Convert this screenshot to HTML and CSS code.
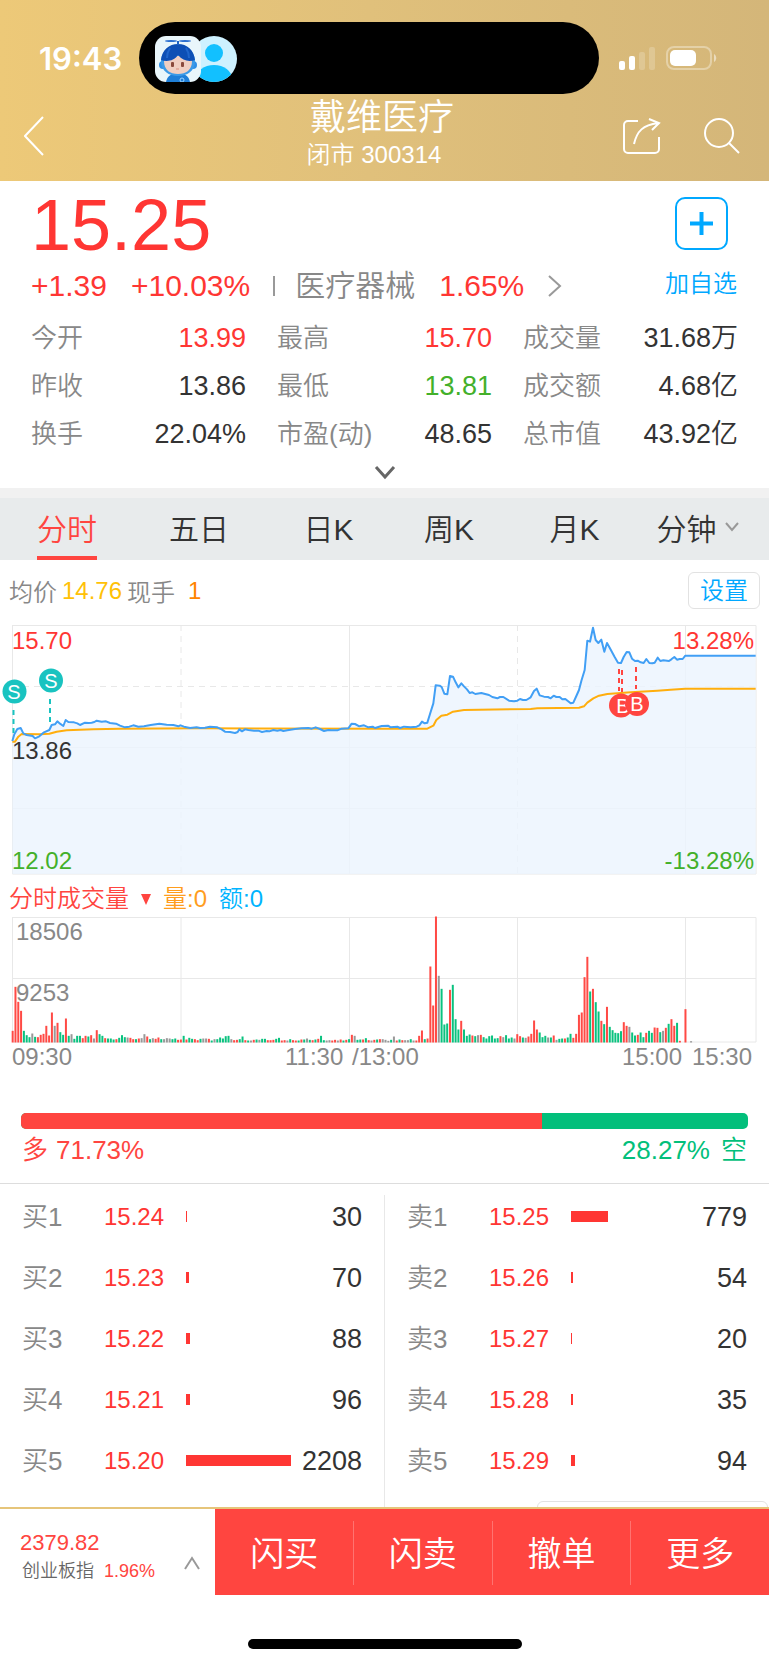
FILE: index.html
```html
<!DOCTYPE html>
<html lang="zh-CN">
<head>
    <meta charset="UTF-8">
    <meta name="viewport" content="width=device-width, initial-scale=1.0">
    <title>戴维医疗 300314</title>
    <link rel="stylesheet" href="styles.css">
</head>
<body>
    <header class="header">
        <div class="status-bar">
            <span class="clock">19:43</span>
            <div class="island">
                <svg width="84" height="46" viewBox="0 0 84 46">
                    <defs>
                        <clipPath id="userClip"><circle cx="59" cy="23" r="23"/></clipPath>
                        <clipPath id="avatarClip"><rect width="46" height="46" rx="11"/></clipPath>
                    </defs>
                    <circle cx="59" cy="23" r="23" fill="#cdf1ff"/>
                    <g clip-path="url(#userClip)" fill="#12c0ff">
                        <circle cx="59" cy="17" r="9"/>
                        <ellipse cx="59" cy="43" rx="18" ry="14"/>
                    </g>
                    <g clip-path="url(#avatarClip)">
                        <rect width="46" height="46" fill="#e9f6fb"/>
                        <path d="M11 46c1-6 6-9 12-9s11 3 12 9z" fill="#1f7fd8"/>
                        <circle cx="8" cy="29" r="4" fill="#2f8fe6"/>
                        <circle cx="38" cy="29" r="4" fill="#2f8fe6"/>
                        <path d="M6 25a17 16 0 0 1 34 0c0 10-8 15-17 15S6 35 6 25z" fill="#3c9be8"/>
                        <path d="M9 25c0 9 6 13 14 13s14-4 14-13l-3-5H12z" fill="#f0cfc2"/>
                        <path d="M6 24C7 14 14 8 23 8s16 6 17 16c-6 2-12 1-17-5-4 6-11 7-17 5z" fill="#0d4fb5"/>
                        <path d="M15 12c-2 3-3 6-3 10M31 12c2 3 3 6 3 10" fill="none" stroke="#1f66cc" stroke-width="2"/>
                        <rect x="16" y="26" width="3" height="5" rx="1" fill="#8a4a3c"/>
                        <rect x="26" y="26" width="3" height="5" rx="1" fill="#8a4a3c"/>
                        <path d="M21 33h3" stroke="#d89080" stroke-width="1"/>
                        <path d="M23 9V5" stroke="#1d62c4" stroke-width="2"/>
                        <ellipse cx="16" cy="5" rx="6" ry="1" fill="#2c70d0"/>
                        <ellipse cx="30" cy="5" rx="6" ry="1" fill="#2c70d0"/>
                        <circle cx="27" cy="44" r="2" fill="none" stroke="#9fd4ff"/>
                    </g>
                </svg>
            </div>
            <svg class="signal" width="99" height="24" viewBox="0 0 99 24" fill="#fff">
                <rect x="0" y="15" width="6" height="9" rx="2"/>
                <rect x="10" y="10" width="6" height="14" rx="2"/>
                <rect x="20" y="6" width="6" height="18" rx="2" opacity=".2"/>
                <rect x="30" y="1" width="6" height="23" rx="2" opacity=".2"/>
                <rect x="48" y="1" width="44" height="22" rx="7" fill="none" stroke="#fff" stroke-width="2" opacity=".35"/>
                <rect x="51" y="4" width="26" height="16" rx="5"/>
                <path d="M95 8c3 2 3 6 0 8z" opacity=".5"/>
            </svg>
        </div>
        <nav class="nav-bar">
            <button class="icon-btn back" aria-label="返回">
                <svg width="20" height="40" viewBox="0 0 20 40"><path d="M19 1 1 20l18 19"/></svg>
            </button>
            <div class="nav-title">
                <h1>戴维医疗</h1>
                <p>闭市 300314</p>
            </div>
            <div class="nav-actions">
                <button class="icon-btn" aria-label="分享">
                    <svg width="38" height="38" viewBox="0 0 38 38">
                        <path d="M15 4H5a4 4 0 0 0-4 4v24a4 4 0 0 0 4 4h27a4 4 0 0 0 4-4V20"/>
                        <path d="M11 27C14 14 20 8 35 6M26 2l10 4-7 7"/>
                    </svg>
                </button>
                <button class="icon-btn" aria-label="搜索">
                    <svg width="37" height="38" viewBox="0 0 37 38"><circle cx="16" cy="16" r="14"/><path d="m26 26 10 10"/></svg>
                </button>
            </div>
        </nav>
    </header>

    <main>
        <section class="quote">
            <div class="quote-top">
                <div>
                    <div class="price">15.25</div>
                    <div class="change">
                        <span class="up">+1.39</span>
                        <span class="up change-pct">+10.03%</span>
                        <i class="sep"></i>
                        <a class="industry" href="#">
                            <span>医疗器械</span>
                            <span class="up">1.65%</span>
                            <svg width="14" height="24" viewBox="0 0 14 24"><path d="m1 2 11 10L1 22"/></svg>
                        </a>
                    </div>
                </div>
                <button class="add-btn">
                    <svg width="53" height="53" viewBox="0 0 53 53">
                        <rect x="1" y="1" width="51" height="51" rx="9" fill="none" stroke="#00a8ff" stroke-width="2"/>
                        <path d="M15 26.500h23M26.500 15v23" stroke="#00a8ff" stroke-width="4"/>
                    </svg>
                    <span>加自选</span>
                </button>
            </div>
            <dl class="stats">
                <div><dt>今开</dt><dd class="up">13.99</dd></div>
                <div><dt>最高</dt><dd class="up">15.70</dd></div>
                <div><dt>成交量</dt><dd>31.68万</dd></div>
                <div><dt>昨收</dt><dd>13.86</dd></div>
                <div><dt>最低</dt><dd class="down">13.81</dd></div>
                <div><dt>成交额</dt><dd>4.68亿</dd></div>
                <div><dt>换手</dt><dd>22.04%</dd></div>
                <div><dt>市盈(动)</dt><dd>48.65</dd></div>
                <div><dt>总市值</dt><dd>43.92亿</dd></div>
            </dl>
            <button class="expand-btn" aria-label="展开">
                <svg width="22" height="16" viewBox="0 0 22 16"><path d="m2 2 9 10 9-10"/></svg>
            </button>
        </section>

        <div class="tabs">
            <button class="tab active">分时</button>
            <button class="tab">五日</button>
            <button class="tab">日K</button>
            <button class="tab">周K</button>
            <button class="tab">月K</button>
            <button class="tab">分钟<svg width="14" height="10" viewBox="0 0 14 10"><path d="m1 1 6 7 6-7"/></svg></button>
        </div>

        <section class="chart">
            <div class="chart-info">
                <span>均价</span>
                <span class="avg">14.76</span>
                <span>现手</span>
                <span class="hand">1</span>
                <button class="set-btn">设置</button>
            </div>

            <svg class="plot" viewBox="0 0 769 267">
                <g class="grid">
                    <path d="M12 10.500H756V259H12.500V10"/>
                    <path d="M12 132.500H756M12 193.500H756M349.500 10V259M685.500 10V259"/>
                    <path d="M12 71.500H756M181 10V259M517.500 10V259" stroke-dasharray="6 5"/>
                </g>
                <polygon id="priceArea" class="area"/>
                <polyline id="avgLine" class="line-avg"/>
                <polyline id="priceLine" class="line-price"/>
                <text x="12" y="34" class="t-up">15.70</text>
                <text x="12" y="144" class="t-base">13.86</text>
                <text x="12" y="254" class="t-down">12.02</text>
                <text x="754" y="34" class="t-up" text-anchor="end">13.28%</text>
                <text x="754" y="254" class="t-down" text-anchor="end">-13.28%</text>
                <g class="sell-mark">
                    <path d="M13.500 95v24M50 84v24"/>
                    <circle cx="14.500" cy="76.500" r="12"/><text x="14" y="84">S</text>
                    <circle cx="51" cy="65.500" r="12"/><text x="51" y="73">S</text>
                </g>
                <g class="buy-mark">
                    <path d="M619 54v22M622 55v22M636 52v22"/>
                    <circle cx="621" cy="90.500" r="12"/><text x="623" y="98">B</text>
                    <circle cx="637" cy="89" r="12"/><text x="637" y="96">B</text>
                </g>
            </svg>

            <div class="volume-info">
                <button class="volume-type">分时成交量<svg width="10" height="11" viewBox="0 0 10 11"><path d="M0 0h10L5 11z"/></svg></button>
                <span class="vol">量:0</span>
                <span class="amt">额:0</span>
            </div>

            <svg class="plot" viewBox="0 0 769 156">
                <g class="grid">
                    <path d="M12 1.500H756V126H12.500V1"/>
                    <path d="M12 62.500H756M181 1V126M349.500 1V126M517.500 1V126M685.500 1V126"/>
                </g>
                <g id="volumeBars"></g>
                <g class="t-label">
                    <text x="16" y="24">18506</text>
                    <text x="16" y="85">9253</text>
                    <text x="12" y="149">09:30</text>
                    <text x="285" y="149">11:30</text>
                    <text x="352" y="149">/13:00</text>
                    <text x="682" y="149" text-anchor="end">15:00</text>
                    <text x="752" y="149" text-anchor="end">15:30</text>
                </g>
            </svg>
        </section>

        <section class="strength">
            <div class="strength-bar"><i style="width: 71.73%"></i></div>
            <div class="strength-text">
                <span class="long"><span>多</span><span>71.73%</span></span>
                <span class="short"><span>28.27%</span><span>空</span></span>
            </div>
        </section>

        <section class="book">
            <table>
                <tr><th>买1</th><td class="p">15.24</td><td><i class="bar" style="width: 1px"></i></td><td class="q">30</td></tr>
                <tr><th>买2</th><td class="p">15.23</td><td><i class="bar" style="width: 3px"></i></td><td class="q">70</td></tr>
                <tr><th>买3</th><td class="p">15.22</td><td><i class="bar" style="width: 4px"></i></td><td class="q">88</td></tr>
                <tr><th>买4</th><td class="p">15.21</td><td><i class="bar" style="width: 4px"></i></td><td class="q">96</td></tr>
                <tr><th>买5</th><td class="p">15.20</td><td><i class="bar" style="width: 105px"></i></td><td class="q">2208</td></tr>
            </table>
            <div class="divider"></div>
            <table>
                <tr><th>卖1</th><td class="p">15.25</td><td><i class="bar" style="width: 37px"></i></td><td class="q">779</td></tr>
                <tr><th>卖2</th><td class="p">15.26</td><td><i class="bar" style="width: 2px"></i></td><td class="q">54</td></tr>
                <tr><th>卖3</th><td class="p">15.27</td><td><i class="bar" style="width: 1px"></i></td><td class="q">20</td></tr>
                <tr><th>卖4</th><td class="p">15.28</td><td><i class="bar" style="width: 2px"></i></td><td class="q">35</td></tr>
                <tr><th>卖5</th><td class="p">15.29</td><td><i class="bar" style="width: 4px"></i></td><td class="q">94</td></tr>
            </table>
            <div class="popup-edge"></div>
        </section>
    </main>

    <footer>
        <div class="bottom-bar">
            <button class="index-box">
                <span class="index-text">
                    <span class="index-value">2379.82</span>
                    <span class="index-name">创业板指 <b>1.96%</b></span>
                </span>
                <svg width="18" height="14" viewBox="0 0 18 14"><path d="m2 13 7-11 7 11"/></svg>
            </button>
            <div class="trade">
                <button>闪买</button>
                <button>闪卖</button>
                <button>撤单</button>
                <button>更多</button>
            </div>
        </div>
        <div class="home-indicator"></div>
    </footer>

    <script src="chart.js"></script>
</body>
</html>
```

FILE: styles.css
```css
* {
    box-sizing: border-box;
    margin: 0;
    padding: 0;
}

body {
    font-family: "Liberation Sans", "Noto Sans CJK SC", sans-serif;
    font-weight: 350;
    font-size: 24px;
    color: #333;
    background: #fff;
}

button {
    font: inherit;
    color: inherit;
    background: none;
    border: none;
    cursor: pointer;
}

a {
    color: inherit;
    text-decoration: none;
}

svg {
    display: block;
    flex: none;
}

.up {
    color: #ff3633;
}

.down {
    color: #43b02a;
}

/* Header */
.header {
    color: #fff;
    background: linear-gradient(90deg, #edc978, #e0c07b 48%, #d4b679);
}

.status-bar {
    display: flex;
    align-items: center;
    padding: 22px 51px 0 39px;
}

.clock {
    width: 100px;
    font-family: Inter, sans-serif;
    font-size: 31px;
    font-weight: 600;
}

.island {
    flex: 1;
    height: 72px;
    padding: 14px 16px;
    border-radius: 36px;
    background: #000;
}

.signal {
    margin-left: 20px;
}

.nav-bar {
    display: grid;
    grid-template-columns: 1fr auto 1fr;
    align-items: center;
    height: 87px;
    padding: 0 29px 4px 24px;
}

.icon-btn svg {
    fill: none;
    stroke: #fff;
    stroke-width: 2;
}

.back {
    justify-self: start;
}

.nav-title {
    padding-bottom: 6px;
    text-align: center;
}

.nav-title h1 {
    font-size: 36px;
    font-weight: 350;
    line-height: 44px;
}

.nav-title p {
    padding-right: 16px;
    line-height: 30px;
}

.nav-actions {
    display: flex;
    justify-content: flex-end;
    gap: 42px;
}

/* Quote */
.quote {
    padding: 0 31px;
    border-bottom: 10px solid #f1f1f1;
}

.quote-top {
    display: flex;
    justify-content: space-between;
}

.price {
    font-size: 72px;
    line-height: 88px;
    color: #ff3633;
}

.change {
    display: flex;
    align-items: center;
    font-size: 30px;
    line-height: 34px;
}

.change-pct {
    margin-left: 24px;
}

.sep {
    width: 2px;
    height: 20px;
    margin: 0 20px 0 23px;
    background: #999;
}

.industry {
    display: flex;
    align-items: center;
    gap: 24px;
    color: #888;
}

.industry svg {
    fill: none;
    stroke: #999;
    stroke-width: 2;
}

.add-btn {
    display: flex;
    flex-direction: column;
    align-items: center;
    gap: 19px;
    padding: 16px 1px 0 0;
    line-height: 30px;
    color: #00a8ff;
}

.stats {
    display: grid;
    grid-template-columns: repeat(3, 1fr);
    column-gap: 31px;
    margin-top: 11px;
    line-height: 48px;
}

.stats div {
    display: flex;
    justify-content: space-between;
}

.stats dt {
    font-size: 26px;
    color: #888;
}

.stats dd {
    font-size: 27px;
}

.expand-btn {
    display: flex;
    justify-content: center;
    align-items: center;
    width: 100%;
    height: 30px;
}

.expand-btn svg {
    fill: none;
    stroke: #666;
    stroke-width: 3;
}

/* Period tabs */
.tabs {
    display: grid;
    grid-template-columns: 134fr 130fr 129fr 112fr 139fr 107fr;
    height: 62px;
    padding-right: 18px;
    background: #e8ebec;
}

.tab {
    display: flex;
    justify-content: center;
    align-items: center;
    justify-self: center;
    gap: 8px;
    border-bottom: 4px solid transparent;
    font-size: 30px;
    white-space: nowrap;
}

.tab.active {
    color: #ff4540;
    border-bottom-color: #ff4540;
}

.tab svg {
    fill: none;
    stroke: #999;
    stroke-width: 2;
}

/* Charts */
.chart-info {
    display: flex;
    align-items: center;
    gap: 5px;
    padding: 12px 9px 6px;
    color: #888;
}

.avg {
    color: #ffc107;
}

.hand {
    margin-left: 8px;
    color: #ff8400;
}

.set-btn {
    height: 37px;
    margin-left: auto;
    padding: 0 11px;
    border: 1px solid #e2e2e2;
    border-radius: 6px;
    line-height: 35px;
    color: #00a8ff;
}

.plot {
    width: 100%;
    height: auto;
    font-size: 24px;
}

.grid {
    fill: none;
    stroke: #e8e8e8;
}

.area {
    fill: #ebf4fe;
    fill-opacity: 0.8;
}

.line-price,
.line-avg {
    fill: none;
    stroke-width: 2;
    stroke-linejoin: round;
}

.line-price {
    stroke: #419ff5;
}

.line-avg {
    stroke: #ffae0d;
}

.t-up {
    fill: #ff3633;
}

.t-down {
    fill: #43b02a;
}

.t-base {
    fill: #333;
}

.t-label {
    fill: #888;
}

.sell-mark path,
.buy-mark path {
    stroke-width: 2;
    stroke-dasharray: 5 4;
}

.sell-mark path {
    stroke: #19c3c0;
}

.sell-mark circle {
    fill: #19c3c0;
}

.buy-mark path {
    stroke: #ff4540;
}

.buy-mark circle {
    fill: #ff4540;
}

.sell-mark text,
.buy-mark text {
    fill: #fff;
    font-size: 20px;
    text-anchor: middle;
}

.volume-info {
    display: flex;
    gap: 12px;
    padding-left: 9px;
    line-height: 34px;
}

.volume-type {
    display: flex;
    align-items: center;
    gap: 12px;
    color: #ff4540;
    fill: #ff4540;
}

.vol {
    color: #ff9d1e;
}

.amt {
    color: #00b4ff;
}

.bar-r {
    fill: #ff4a45;
}

.bar-g {
    fill: #0ac27f;
}

.bar-k {
    fill: #999;
}

/* Long / short strength */
.strength {
    padding: 41px 21px 16px;
    border-bottom: 1px solid #ddd;
}

.strength-bar {
    display: flex;
    height: 16px;
    border-radius: 5px;
    overflow: hidden;
    background: #02bf7b;
}

.strength-bar i {
    background: #ff4540;
}

.strength-text {
    display: flex;
    justify-content: space-between;
    padding: 4px 1px 0;
    font-size: 26px;
    line-height: 34px;
}

.long,
.short {
    display: flex;
    gap: 8px;
}

.long {
    color: #ff4540;
}

.short {
    gap: 11px;
    color: #02bf7b;
}

/* Order book */
.book {
    position: relative;
    display: grid;
    grid-template-columns: 1fr 1px 1fr;
    overflow: hidden;
}

.book table {
    width: 100%;
    padding: 2px 22px 16px;
    border-spacing: 0;
    table-layout: fixed;
    line-height: 30px;
}

.book tr {
    height: 61px;
}

.book th {
    width: 82px;
    font-size: 26px;
    font-weight: 350;
    text-align: left;
    color: #888;
}

.book .p {
    width: 82px;
    color: #ff3633;
}

.book .q {
    width: 64px;
    font-size: 27px;
    text-align: right;
}

.bar {
    display: block;
    height: 11px;
    background: #ff3633;
}

.divider {
    margin-top: 11px;
    background: #e8e8e8;
}

.popup-edge {
    position: absolute;
    right: 1px;
    bottom: -14px;
    width: 30%;
    height: 20px;
    border: 1px solid #e2e2e2;
    border-radius: 6px;
    background: #fff;
}

/* Bottom bar */
.bottom-bar {
    display: flex;
    border-top: 2px solid #e6c57a;
}

.index-box {
    display: flex;
    justify-content: space-between;
    align-items: center;
    width: 28%;
    height: 86px;
    padding: 8px 14px 0 20px;
    text-align: left;
    white-space: nowrap;
}

.index-box svg {
    margin-top: 14px;
    fill: none;
    stroke: #999;
    stroke-width: 2;
}

.index-text {
    display: flex;
    flex-direction: column;
}

.index-value {
    font-size: 22px;
    line-height: 30px;
    color: #ff4540;
}

.index-name {
    padding-left: 2px;
    font-size: 18px;
    line-height: 26px;
    color: #666;
}

.index-name b {
    margin-left: 5px;
    font-weight: 350;
    color: #ff4540;
}

.trade {
    display: flex;
    flex: 1;
    padding: 12px 0 10px;
    color: #fff;
    background: #ff4540;
}

.trade button {
    flex: 1;
    padding-bottom: 4px;
    font-size: 34px;
}

.trade button + button {
    border-left: 1px solid rgba(255, 255, 255, 0.25);
}

.home-indicator {
    width: 274px;
    height: 10px;
    margin: 44px auto 16px;
    border-radius: 5px;
    background: #000;
}
```

FILE: chart.js
```javascript
// Points are in @3x device pixels, the plots are drawn at @1x
const SCALE = 3;
const PRICE_TOP = 390;
const AREA_BOTTOM = 1167;

const price = [
    [37,768],[43,748],[52,732],[62,729],[70,745],[80,750],[98,753],[105,760],[118,754],[132,742],
    [148,735],[155,720],[165,718],[172,709],[180,716],[190,723],[197,705],[205,711],[222,712],[232,715],
    [240,720],[255,713],[266,714],[275,713],[283,711],[290,707],[305,710],[318,709],[330,714],[348,716],
    [360,722],[375,727],[388,725],[400,721],[415,725],[432,724],[452,720],[478,716],[500,719],[520,720],
    [535,724],[541,721],[552,725],[570,729],[590,727],[600,729],[615,728],[630,725],[652,727],[665,733],
    [675,740],[690,741],[705,744],[713,741],[718,733],[726,739],[735,733],[745,735],[762,737],[775,737],
    [786,741],[800,738],[808,739],[820,735],[832,737],[842,735],[850,738],[862,736],[885,732],[905,730],
    [925,729],[935,731],[947,727],[960,732],[972,738],[985,735],[995,736],[1012,736],[1025,731],[1045,730],
    [1055,716],[1065,717],[1078,724],[1092,721],[1105,727],[1118,725],[1125,729],[1145,723],[1164,722],[1172,727],
    [1192,725],[1200,729],[1212,725],[1232,727],[1250,725],[1258,721],[1266,710],[1274,715],[1282,713],[1290,687],
    [1300,655],[1307,601],[1319,602],[1325,606],[1333,626],[1342,628],[1350,573],[1359,575],[1367,592],[1375,607],
    [1384,595],[1392,604],[1401,613],[1409,624],[1417,622],[1426,627],[1444,624],[1467,630],[1477,636],[1492,640],
    [1500,636],[1510,636],[1527,647],[1542,649],[1552,647],[1560,642],[1569,645],[1579,645],[1592,637],[1602,618],
    [1610,611],[1619,631],[1632,635],[1644,636],[1652,640],[1661,632],[1669,636],[1679,636],[1687,643],[1696,642],
    [1712,655],[1720,653],[1729,633],[1737,615],[1744,588],[1754,555],[1762,467],[1770,470],[1779,428],[1787,465],
    [1795,474],[1804,464],[1813,500],[1821,474],[1829,488],[1844,516],[1854,533],[1863,534],[1871,516],[1880,501],
    [1888,502],[1896,521],[1905,528],[1913,527],[1922,532],[1931,534],[1939,522],[1948,534],[1957,535],[1964,533],
    [1973,518],[1981,528],[1990,526],[2007,528],[2014,523],[2023,516],[2031,524],[2039,522],[2048,522],[2056,512],
    [2267,512]
];

const avg = [
    [37,770],[45,770],[55,755],[65,747],[120,748],[148,746],[170,740],[200,736],[280,733],[360,731],
    [600,730],[1152,731],[1282,731],[1300,722],[1309,705],[1324,692],[1342,689],[1359,680],[1392,675],[1592,672],
    [1612,670],[1737,668],[1752,664],[1762,653],[1780,640],[1797,632],[1822,627],[1892,622],[1972,617],[2012,614],
    [2056,611],[2267,611]
];

// One entry per minute: r = up, g = down, k = flat, then the bar height
const volume = `
r35 r167 r122 r95 g35 g22 g16 k27 g17 r16 r23 r26 r50 r21 r90 k50 r59 g31 g23 r72
g20 k25 g11 g20 g20 r13 r20 g18 r22 k12 r37 g25 g20 r13 g12 g12 g9 r10 g14 g22
g16 k15 r14 r10 g10 r12 k13 k25 r18 g10 k13 r11 r15 g10 k10 k13 k12 g10 g12 r8
r9 g20 r9 g14 g11 r10 r7 g11 k12 k12 r11 g6 k10 g10 g15 g12 g19 g20 k10 r7
r8 g10 g18 r7 g6 k6 r8 g9 k8 g11 g11 r7 r7 r8 g11 g14 r6 r7 k6 g10
r7 r6 g6 r9 g9 k12 g8 r7 g9 r11 g20 g7 k6 k7 r6 r8 k6 r9 g6 r8
g10 r23 k20 g8 g9 r9 g13 r7 k6 r8 g9 r10 k10 k8 k5 g8 k18 r6 g9 r7
k7 k7 g10 k6 r6 r20 r36 g10 r12 r228 r111 r378 k200 g161 g54 g57 r158 g173 g70 g39
r65 g39 g20 g24 r21 g19 k22 r23 g16 g12 g19 g21 g12 g13 r19 k16 g22 g12 g15 k12
r25 r19 g15 k14 r18 r26 r66 r39 g30 g16 g20 k15 g15 r21 k8 g11 g12 r12 g15 g26
r14 r26 r83 r90 r196 r257 g153 r161 g121 g93 r65 g55 r107 g47 g37 g29 g28 g34 r61 r50
k47 g30 g21 r23 g30 g16 r29 g35 g29 r45 r44 g31 k35 r44 g56 r70 r50 g59 r5 k0
r100 k0 k4`.trim().split(/\s+/);

function toPoints(list) {
    return list.map(([x, y]) => `${x / SCALE},${(y - PRICE_TOP) / SCALE}`).join(' ');
}

document.getElementById('priceLine').setAttribute('points', toPoints(price));
document.getElementById('avgLine').setAttribute('points', toPoints(avg));
document.getElementById('priceArea').setAttribute('points',
    toPoints([...price, [2267, AREA_BOTTOM], [37, AREA_BOTTOM]]));

document.getElementById('volumeBars').innerHTML = volume.map((item, i) => {
    const h = item.slice(1) / SCALE;
    const x = (35 + i * 8.41) / SCALE;
    return `<rect class="bar-${item[0]}" x="${x}" y="${126.5 - h}" width="2" height="${h}"/>`;
}).join('');
```
